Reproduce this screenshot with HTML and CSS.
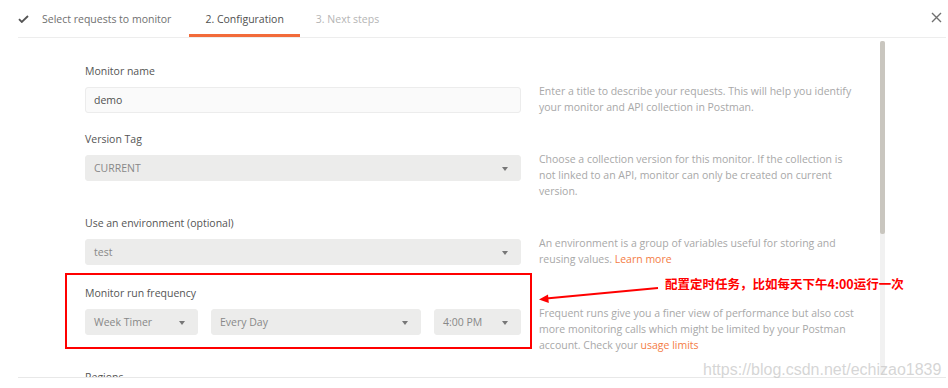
FILE: index.html
```html
<!DOCTYPE html>
<html lang="en">
<head>
  <meta charset="UTF-8" />
  <title>Create a monitor</title>
  <link rel="stylesheet" href="styles.css">
</head>
<body>
  <div class="modal">
    <div class="tabs">
      <div class="tab done">
        <svg class="check" width="11" height="8" viewBox="0 0 11 8"><path d="M1 4.2 L3.8 7 L10 1" fill="none" stroke="#555" stroke-width="1.8"/></svg>
        Select requests to monitor
      </div>
      <div class="tab active">2. Configuration</div>
      <div class="tab todo">3. Next steps</div>
      <button class="close" title="Close">
        <svg width="11" height="11" viewBox="0 0 11 11"><path d="M1 1 L10 10 M10 1 L1 10" stroke="#707070" stroke-width="1.4"/></svg>
      </button>
    </div>

    <div class="pane">
      <div class="form">
        <div class="row">
          <div class="field">
            <label>Monitor name</label>
            <div class="input">demo</div>
          </div>
          <p class="help">Enter a title to describe your requests. This will help you identify your monitor and API collection in Postman.</p>
        </div>

        <div class="row">
          <div class="field">
            <label>Version Tag</label>
            <div class="select">CURRENT</div>
          </div>
          <p class="help">Choose a collection version for this monitor. If the collection is not linked to an API, monitor can only be created on current version.</p>
        </div>

        <div class="row">
          <div class="field">
            <label>Use an environment (optional)</label>
            <div class="select">test</div>
          </div>
          <p class="help">An environment is a group of variables useful for storing and reusing values. <a href="#">Learn more</a></p>
        </div>

        <div class="row marked">
          <div class="field">
            <label>Monitor run frequency</label>
            <div class="freq">
              <div class="select timer">Week Timer</div>
              <div class="select day">Every Day</div>
              <div class="select hour">4:00 PM</div>
            </div>
          </div>
          <p class="help">Frequent runs give you a finer view of performance but also cost more monitoring calls which might be limited by your Postman account. Check your <a href="#">usage limits</a></p>
          <div class="red-box"></div>
          <div class="note">配置定时任务，比如每天下午4:00运行一次</div>
          <svg class="arrow" width="124" height="20" viewBox="0 0 124 20">
            <path d="M120 3 L8 13.5" stroke="#f00" stroke-width="2" fill="none"/>
            <path d="M1 14.5 L10 9.5 L10.8 18 Z" fill="#f00"/>
          </svg>
        </div>

        <div class="row">
          <div class="field">
            <label>Regions</label>
          </div>
        </div>
      </div>
      <div class="scrollbar"><div class="thumb"></div></div>
    </div>

    <div class="watermark">https://blog.csdn.net/echizao1839</div>
  </div>
</body>
</html>
```

FILE: styles.css
```css
* { box-sizing: border-box; margin: 0; padding: 0; }
html, body { height: 100%; overflow: hidden; }
body {
  font-family: 'Open Sans', sans-serif;
  font-size: 10.5px;
  color: #505050;
  background: #fff;
}
.modal {
  position: relative;
  height: 388px;
}
.tabs {
  display: flex;
  align-items: stretch;
  height: 38px;
  margin: 0 2px 0 18px;
  border-bottom: 1px solid #ededed;
}
.tab {
  display: flex;
  align-items: center;
  padding: 0 16px;
  font-size: 10.5px;
  border-bottom: 3px solid transparent;
  padding-top: 3px;
}
.tab.done { padding-left: 0; padding-right: 18px; color: #707070; }
.tab.done .check { margin-right: 13px; }
.tab.active { color: #505050; border-bottom-color: #f26b3a; }
.tab.todo { color: #b5b5b5; }
.close {
  margin-left: auto;
  width: 20px;
  background: none;
  border: none;
  display: flex;
  align-items: center;
  justify-content: center;
  padding-bottom: 2px;
}
.pane {
  display: flex;
  height: 340px;
  margin: 0 2px 0 18px;
  border-bottom: 1px solid #e8e8e8;
  overflow: hidden;
}
.form {
  flex: 1;
  padding: 25px 0 0 67px;
}
.row {
  position: relative;
  display: grid;
  grid-template-columns: 436px 320px;
  column-gap: 18px;
  margin-bottom: 16px;
}
.row.marked { margin-top: 18px; }
label {
  display: block;
  line-height: 16px;
  color: #555;
  margin-bottom: 8px;
}
.input, .select {
  height: 26px;
  line-height: 24px;
  padding: 0 8px;
  border: 1px solid #ececec;
  border-radius: 3px;
  color: #505050;
}
.input { background: #fafafa; }
.select {
  position: relative;
  background: #ececeb;
  border-color: #ececeb;
  color: #888;
}
.select::after {
  content: '';
  position: absolute;
  right: 12px;
  top: 11px;
  border-left: 3.5px solid transparent;
  border-right: 3.5px solid transparent;
  border-top: 4px solid #777;
}
.freq {
  display: flex;
  gap: 13px;
}
.freq .timer { width: 113px; }
.freq .day { flex: 1; }
.freq .hour { width: 87px; }
.help {
  padding-top: 20px;
  line-height: 16px;
  color: #a8a8a8;
}
.help a { color: #f47c45; text-decoration: none; }
.scrollbar {
  width: 5px;
  margin: 3px 61px 2px 0;
  background: #f1f1f1;
  border-radius: 2px;
}
.thumb {
  height: 193px;
  background: #c9c6bf;
  border-radius: 2px;
}
.red-box {
  position: absolute;
  left: -20px;
  top: -12px;
  width: 467px;
  height: 76px;
  border: 2px solid #f00;
}
.note {
  position: absolute;
  left: 580px;
  top: -9px;
  white-space: nowrap;
  font-family: 'Noto Sans CJK SC', sans-serif;
  font-size: 12.5px;
  font-weight: 700;
  line-height: 16px;
  color: #f00;
}
.arrow {
  position: absolute;
  left: 453px;
  top: 0px;
}
.watermark {
  position: absolute;
  left: 703px;
  top: 360px;
  font-family: 'Liberation Sans', Arial, sans-serif;
  font-size: 16px;
  line-height: 20px;
  color: rgba(200, 200, 200, 0.75);
  white-space: nowrap;
}
```
